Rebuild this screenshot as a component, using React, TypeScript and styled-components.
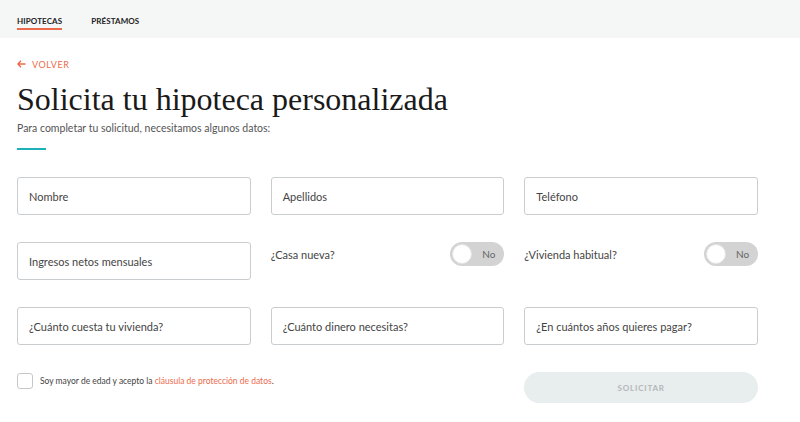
import React from 'react';
import styled, { createGlobalStyle } from 'styled-components';

const GlobalStyle = createGlobalStyle`
  body {
    margin: 0;
    background: #ffffff;
    font-family: Lato, 'Noto Sans', sans-serif;
    color: #333;
  }
  * { box-sizing: border-box; }
`;

const ORANGE = '#ec6a4c';

const TopBar = styled.header`
  height: 38px;
  background: #f5f6f6;
  display: flex;
  align-items: center;
  gap: 29px;
  padding: 0 17px;
`;

const NavItem = styled.a<{ $active?: boolean }>`
  font-size: 8px;
  font-weight: 700;
  letter-spacing: 0.1px;
  color: #222;
  text-decoration: none;
  padding: 3px 0 2px;
  border-bottom: 2px solid ${p => (p.$active ? ORANGE : 'transparent')};
  margin-top: 4px;
`;

const Main = styled.main`
  width: 741px;
  margin-left: 17px;
  padding-top: 20px;
`;

const BackLink = styled.a`
  display: flex;
  align-items: center;
  gap: 6px;
  color: ${ORANGE};
  font-size: 9px;
  letter-spacing: 0.6px;
  text-decoration: none;
  height: 12px;
`;

const Title = styled.h1`
  font-family: 'Liberation Serif', serif;
  font-weight: 400;
  font-size: 32px;
  color: #1a1a1a;
  margin: 10px 0 0;
  line-height: 38px;
`;

const Subtitle = styled.p`
  margin: 4px 0 0;
  font-size: 10.5px;
  color: #555;
`;

const Accent = styled.div`
  width: 29px;
  height: 2px;
  background: #1cb0b8;
  margin-top: 14px;
`;

const Form = styled.form`
  display: grid;
  grid-template-columns: repeat(3, 1fr);
  column-gap: 20px;
  row-gap: 27px;
  margin-top: 27px;
`;

const Field = styled.div`
  height: 38px;
  border: 1px solid #c9cdd0;
  border-radius: 3px;
  display: flex;
  align-items: center;
  padding: 0 11px;
  font-size: 11px;
  color: #444;
`;

const ToggleRow = styled.div`
  height: 38px;
  display: flex;
  align-items: flex-start;
  justify-content: space-between;
  font-size: 11px;
  color: #444;
`;

const ToggleLabel = styled.span`
  margin-top: 6px;
`;

const Switch = styled.div`
  width: 54px;
  height: 24px;
  border-radius: 12px;
  background: #d3d3d3;
  display: flex;
  align-items: center;
  padding: 0 2px;
  gap: 10px;
`;

const Knob = styled.span`
  width: 20px;
  height: 20px;
  border-radius: 50%;
  background: #fff;
  border: 1px solid #e4e4e4;
`;

const SwitchText = styled.span`
  font-size: 10px;
  color: #666;
`;

const Consent = styled.label`
  grid-column: span 2;
  align-self: start;
  display: flex;
  align-items: center;
  gap: 7px;
  font-size: 8.5px;
  color: #444;
  margin-top: 1px;
`;

const Box = styled.span`
  width: 16px;
  height: 16px;
  border: 1px solid #c4c8cb;
  border-radius: 3px;
`;

const Link = styled.a`
  color: ${ORANGE};
  text-decoration: none;
`;

const SubmitButton = styled.button`
  height: 31px;
  border: none;
  border-radius: 16px;
  background: #e8eded;
  color: #b3b8ba;
  font-family: inherit;
  font-size: 8px;
  letter-spacing: 0.8px;
  font-weight: 700;
  margin-top: 0;
`;

const Toggle: React.FC<{ label: string }> = ({ label }) => (
  <ToggleRow>
    <ToggleLabel>{label}</ToggleLabel>
    <Switch>
      <Knob />
      <SwitchText>No</SwitchText>
    </Switch>
  </ToggleRow>
);

export default function App() {
  return (
    <>
      <GlobalStyle />
      <TopBar>
        <NavItem $active>HIPOTECAS</NavItem>
        <NavItem>PRÉSTAMOS</NavItem>
      </TopBar>
      <Main>
        <BackLink>
          <svg width="9" height="8" viewBox="0 0 9 8" fill="none" stroke={ORANGE} strokeWidth="1.4">
            <path d="M8.5 4H1M4 0.8L0.9 4L4 7.2" />
          </svg>
          VOLVER
        </BackLink>
        <Title>Solicita tu hipoteca personalizada</Title>
        <Subtitle>Para completar tu solicitud, necesitamos algunos datos:</Subtitle>
        <Accent />
        <Form>
          <Field>Nombre</Field>
          <Field>Apellidos</Field>
          <Field>Teléfono</Field>
          <Field>Ingresos netos mensuales</Field>
          <Toggle label="¿Casa nueva?" />
          <Toggle label="¿Vivienda habitual?" />
          <Field>¿Cuánto cuesta tu vivienda?</Field>
          <Field>¿Cuánto dinero necesitas?</Field>
          <Field>¿En cuántos años quieres pagar?</Field>
          <Consent>
            <Box />
            <span>
              Soy mayor de edad y acepto la <Link>cláusula de protección de datos</Link>.
            </span>
          </Consent>
          <SubmitButton type="button">SOLICITAR</SubmitButton>
        </Form>
      </Main>
    </>
  );
}
